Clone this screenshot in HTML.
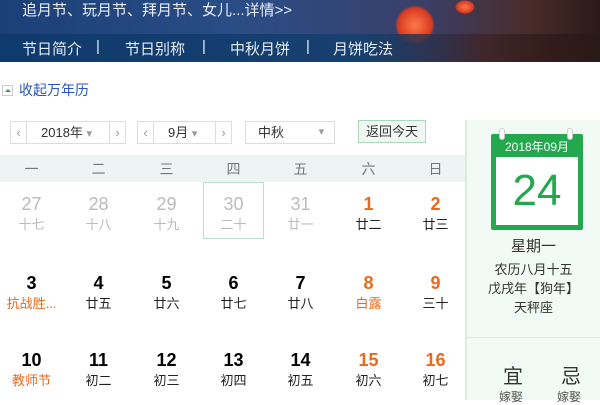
<!DOCTYPE html><html><head><meta charset="utf-8"><style>
*{margin:0;padding:0;box-sizing:border-box}
body{width:600px;height:400px;overflow:hidden;background:#fff;font-family:"Liberation Sans","Noto Sans CJK SC",sans-serif;position:relative}
.banner{position:absolute;left:0;top:0;width:600px;height:62px;background:linear-gradient(90deg,#1c3f78 0%,#2a4d86 40%,#3a3f6a 70%,#4a2c2a 88%,#2a1a18 100%)}
.banner .t{position:absolute;left:22px;top:0;color:#e8eef8;font-size:15px;line-height:22px}
.nav{position:absolute;left:0;top:34px;width:600px;height:28px;background:linear-gradient(90deg,#0f3a6e,#17406f 60%,rgba(60,30,30,.6) 80%,#2a1a18);}
.nav span{position:absolute;top:4px;color:#e5ecf5;font-size:15px}
.lan{position:absolute;border-radius:50%;background:radial-gradient(#ff7a4a,#d83a20 60%,rgba(200,50,30,0) 70%)}
.fold{position:absolute;left:2px;top:80px;font-size:14px;color:#2a56b8}
.fold i{display:inline-block;width:11px;height:11px;border:1px solid #ccc;vertical-align:-1px;margin-right:6px;position:relative}
.fold i:after{content:"";position:absolute;left:2px;top:3px;border:3px solid transparent;border-bottom:3px solid #3a9a4a;border-top:0}
.sel{position:absolute;top:121px;height:23px;border:1px solid #ddd;font-size:13px;color:#333;line-height:21px}
.sel b{position:absolute;top:0;width:16px;text-align:center;font-weight:normal;color:#999}
.wk{position:absolute;left:0;top:155px;width:465px;height:27px;background:#eef3f3}
.wk span{position:absolute;top:4px;width:67px;text-align:center;color:#777;font-size:14px;margin-left:-33px}
.d{position:absolute;width:67px;text-align:center;margin-left:-33px}
.d .n{font-size:18px;font-weight:bold;line-height:22px}
.d .l{font-size:13px;line-height:20px;color:#222}
.g .n{color:#bbb;font-weight:normal}.g .l{color:#bbb}
.r .n{color:#e86a1e}
.o .l{color:#e86a1e}
.rp{position:absolute;left:465px;top:120px;width:135px;height:280px;background:#f2faf5;border-left:2px solid #d5eedd}
</style></head><body>
<div class="banner">
<div class="lan" style="left:395px;top:5px;width:40px;height:40px"></div>
<div class="lan" style="left:318px;top:40px;width:22px;height:22px;opacity:.7"></div>
<div class="lan" style="left:455px;top:0;width:20px;height:14px"></div>
<div class="t">追月节、玩月节、拜月节、女儿...详情&gt;&gt;</div>
<div class="nav"><span style="left:22px">节日简介</span><span style="left:96px">|</span><span style="left:125px">节日别称</span><span style="left:202px">|</span><span style="left:230px">中秋月饼</span><span style="left:306px">|</span><span style="left:333px">月饼吃法</span></div>
</div>
<div class="fold"><i></i>收起万年历</div>
<div class="sel" style="left:10px;width:116px"><b style="left:0;border-right:1px solid #ddd">‹</b><span style="position:absolute;left:30px">2018年 <small style="color:#999">▾</small></span><b style="right:0;border-left:1px solid #ddd">›</b></div>
<div class="sel" style="left:137px;width:95px"><b style="left:0;border-right:1px solid #ddd">‹</b><span style="position:absolute;left:30px">9月 <small style="color:#999">▾</small></span><b style="right:0;border-left:1px solid #ddd">›</b></div>
<div class="sel" style="left:245px;width:90px"><span style="position:absolute;left:12px">中秋</span><small style="position:absolute;right:10px;color:#999">▾</small></div>
<div class="sel" style="left:358px;top:120px;width:68px;border-color:#a8d8b8;background:#f1f8f3;text-align:center">返回今天</div>
<div class="wk"><span style="left:31px">一</span><span style="left:98px">二</span><span style="left:166px">三</span><span style="left:233px">四</span><span style="left:300px">五</span><span style="left:368px">六</span><span style="left:435px">日</span></div>
<div style="position:absolute;left:203px;top:182px;width:61px;height:57px;border:1px solid #b8e0d0"></div>
<div class="d g" style="left:31px;top:193px"><div class="n">27</div><div class="l">十七</div></div>
<div class="d g" style="left:98px;top:193px"><div class="n">28</div><div class="l">十八</div></div>
<div class="d g" style="left:166px;top:193px"><div class="n">29</div><div class="l">十九</div></div>
<div class="d g" style="left:233px;top:193px"><div class="n">30</div><div class="l">二十</div></div>
<div class="d g" style="left:300px;top:193px"><div class="n">31</div><div class="l">廿一</div></div>
<div class="d r" style="left:368px;top:193px"><div class="n">1</div><div class="l">廿二</div></div>
<div class="d r" style="left:435px;top:193px"><div class="n">2</div><div class="l">廿三</div></div>
<div class="d o" style="left:31px;top:272px"><div class="n">3</div><div class="l">抗战胜...</div></div>
<div class="d" style="left:98px;top:272px"><div class="n">4</div><div class="l">廿五</div></div>
<div class="d" style="left:166px;top:272px"><div class="n">5</div><div class="l">廿六</div></div>
<div class="d" style="left:233px;top:272px"><div class="n">6</div><div class="l">廿七</div></div>
<div class="d" style="left:300px;top:272px"><div class="n">7</div><div class="l">廿八</div></div>
<div class="d r o" style="left:368px;top:272px"><div class="n">8</div><div class="l">白露</div></div>
<div class="d r" style="left:435px;top:272px"><div class="n">9</div><div class="l">三十</div></div>
<div class="d o" style="left:31px;top:349px"><div class="n">10</div><div class="l">教师节</div></div>
<div class="d" style="left:98px;top:349px"><div class="n">11</div><div class="l">初二</div></div>
<div class="d" style="left:166px;top:349px"><div class="n">12</div><div class="l">初三</div></div>
<div class="d" style="left:233px;top:349px"><div class="n">13</div><div class="l">初四</div></div>
<div class="d" style="left:300px;top:349px"><div class="n">14</div><div class="l">初五</div></div>
<div class="d r" style="left:368px;top:349px"><div class="n">15</div><div class="l">初六</div></div>
<div class="d r" style="left:435px;top:349px"><div class="n">16</div><div class="l">初七</div></div>
<div class="rp">
<div style="position:absolute;left:24px;top:14px;width:92px;height:96px;background:#23a84e;border-radius:2px"></div>
<div style="position:absolute;left:32px;top:8px;width:6px;height:12px;border-radius:3px;background:#fff;border:1px solid #ccc"></div>
<div style="position:absolute;left:100px;top:8px;width:6px;height:12px;border-radius:3px;background:#fff;border:1px solid #ccc"></div>
<div style="position:absolute;left:24px;top:18px;width:92px;text-align:center;color:#fff;font-size:12px">2018年09月</div>
<div style="position:absolute;left:29px;top:37px;width:82px;height:68px;background:#fff;text-align:center;color:#23a84e;font-size:44px;line-height:68px">24</div>
<div style="position:absolute;left:0;top:115px;width:133px;text-align:center;font-size:15px;color:#333">星期一</div>
<div style="position:absolute;left:0;top:139px;width:133px;text-align:center;font-size:13px;color:#333">农历八月十五</div>
<div style="position:absolute;left:0;top:158px;width:133px;text-align:center;font-size:13px;color:#333">戊戌年【狗年】</div>
<div style="position:absolute;left:0;top:177px;width:133px;text-align:center;font-size:13px;color:#333">天秤座</div>
<div style="position:absolute;left:0;top:217px;width:133px;border-top:1px solid #d5eedd"></div>
<div style="position:absolute;left:36px;top:240px;font-size:20px;color:#333">宜</div>
<div style="position:absolute;left:94px;top:240px;font-size:20px;color:#333">忌</div>
<div style="position:absolute;left:32px;top:268px;font-size:12px;color:#555">嫁娶</div>
<div style="position:absolute;left:90px;top:268px;font-size:12px;color:#555">嫁娶</div>
</div>
</body></html>
